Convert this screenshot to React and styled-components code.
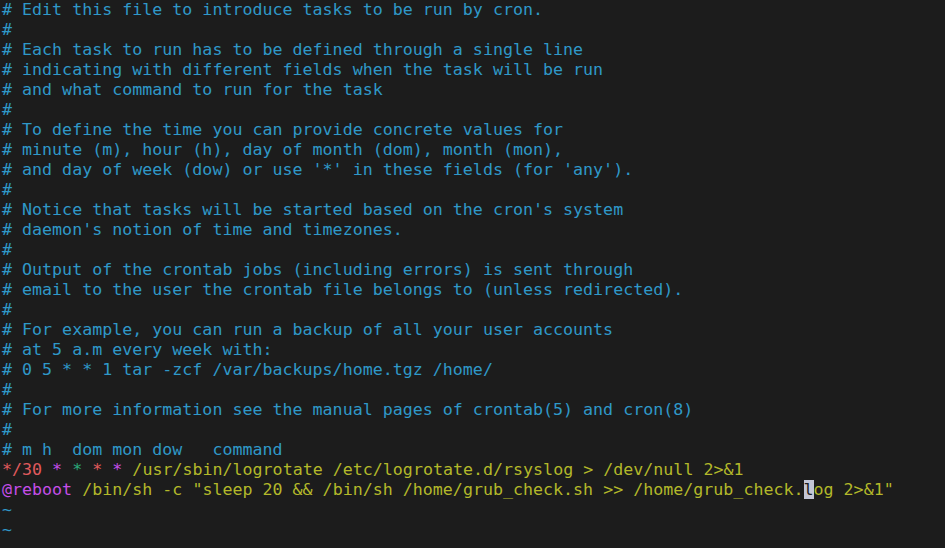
import React from "react";
import styled, { createGlobalStyle } from "styled-components";

const Global = createGlobalStyle`
  html, body { margin: 0; padding: 0; background: #1c1c1c; }
  body { width: 945px; height: 548px; overflow: hidden; }
`;

const Terminal = styled.div`
  box-sizing: border-box;
  width: 945px;
  height: 548px;
  background: #1c1c1c;
  padding: 0 0 0 2px;
  font-family: "DejaVu Sans Mono", "Liberation Mono", monospace;
  font-size: 16.65px;
  line-height: 20px;
  color: #2f98c8;
  display: flex;
  flex-direction: column;
`;

const Line = styled.div`
  white-space: pre;
  height: 20px;
`;

const palette = {
  comment: "#2f98c8",
  red: "#e05a5c",
  purple: "#c44ee8",
  green: "#2aa87a",
  yellow: "#b3b82a",
  tilde: "#2f98c8",
};

const Tok = styled.span`
  color: ${(p) => palette[p.$c] || palette.comment};
`;

const Cursor = styled.span`
  background: #c3c6d6;
  color: #1c1c1c;
`;

const comments = [
  "# Edit this file to introduce tasks to be run by cron.",
  "#",
  "# Each task to run has to be defined through a single line",
  "# indicating with different fields when the task will be run",
  "# and what command to run for the task",
  "#",
  "# To define the time you can provide concrete values for",
  "# minute (m), hour (h), day of month (dom), month (mon),",
  "# and day of week (dow) or use '*' in these fields (for 'any').",
  "#",
  "# Notice that tasks will be started based on the cron's system",
  "# daemon's notion of time and timezones.",
  "#",
  "# Output of the crontab jobs (including errors) is sent through",
  "# email to the user the crontab file belongs to (unless redirected).",
  "#",
  "# For example, you can run a backup of all your user accounts",
  "# at 5 a.m every week with:",
  "# 0 5 * * 1 tar -zcf /var/backups/home.tgz /home/",
  "#",
  "# For more information see the manual pages of crontab(5) and cron(8)",
  "#",
  "# m h  dom mon dow   command",
];

export default function App() {
  return (
    <>
      <Global />
      <Terminal>
        {comments.map((t, i) => (
          <Line key={i}>
            <Tok $c="comment">{t}</Tok>
          </Line>
        ))}
        <Line>
          <Tok $c="red">*/30</Tok> <Tok $c="purple">*</Tok>{" "}
          <Tok $c="green">*</Tok> <Tok $c="red">*</Tok>{" "}
          <Tok $c="purple">*</Tok>{" "}
          <Tok $c="yellow">/usr/sbin/logrotate /etc/logrotate.d/rsyslog &gt; /dev/null 2&gt;&amp;1</Tok>
        </Line>
        <Line>
          <Tok $c="purple">@reboot</Tok>{" "}
          <Tok $c="yellow">
            /bin/sh -c "sleep 20 &amp;&amp; /bin/sh /home/grub_check.sh &gt;&gt; /home/grub_check.
            <Cursor>l</Cursor>og 2&gt;&amp;1"
          </Tok>
        </Line>
        <Line>
          <Tok $c="tilde">~</Tok>
        </Line>
        <Line>
          <Tok $c="tilde">~</Tok>
        </Line>
      </Terminal>
    </>
  );
}
